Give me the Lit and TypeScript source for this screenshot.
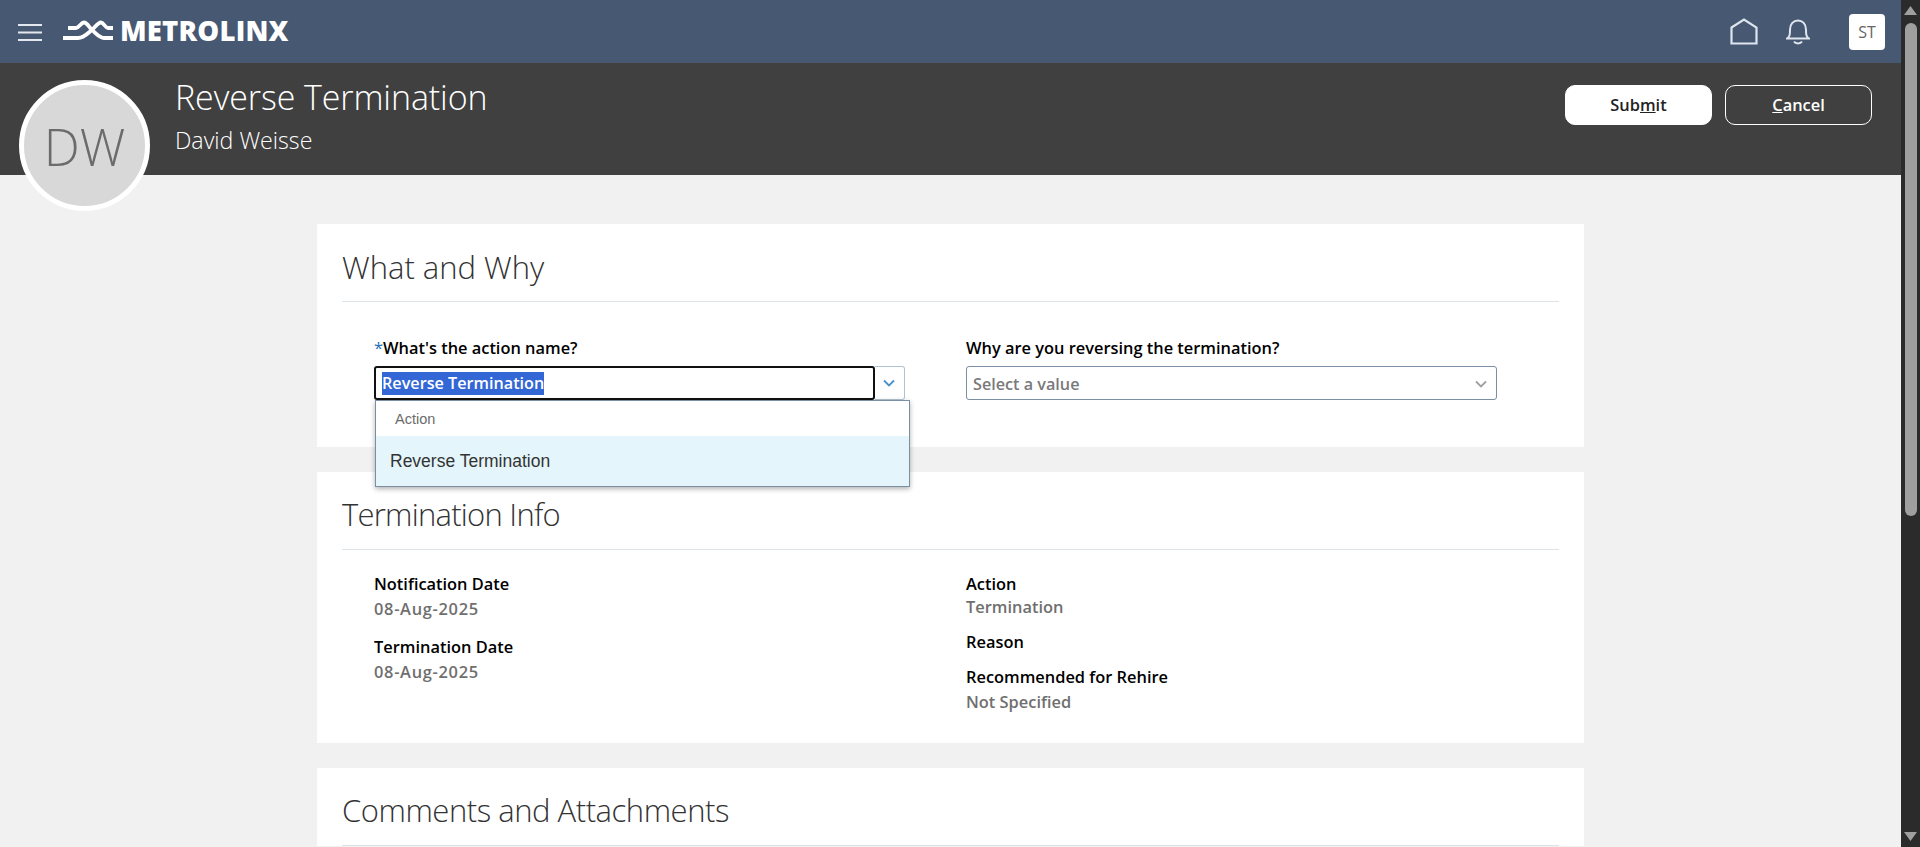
import { LitElement, html, css, nothing } from "lit";
import { customElement } from "lit/decorators.js";

const chevron = (color: string) => html`<svg class="chev" width="14" height="14" viewBox="0 0 14 14" fill="none" stroke=${color} stroke-width="1.8"><path d="M2 4.5 7 9.5 12 4.5" /></svg>`;

interface InfoItem {
  label: string;
  value?: string;
  tight?: boolean;
  date?: boolean;
}

const leftInfo: InfoItem[] = [
  { label: "Notification Date", value: "08-Aug-2025", date: true },
  { label: "Termination Date", value: "08-Aug-2025", date: true },
];

const rightInfo: InfoItem[] = [
  { label: "Action", value: "Termination", tight: true },
  { label: "Reason" },
  { label: "Recommended for Rehire", value: "Not Specified" },
];

@customElement("app-root")
export class AppRoot extends LitElement {
  static styles = css`
    :host {
      display: flex;
      height: 847px;
      overflow: hidden;
      font-family: "Open Sans", "Noto Sans", sans-serif;
      background: #f1f1f1;
      color: #000;
    }
    .page {
      flex: 1;
      min-width: 0;
      position: relative;
      overflow: hidden;
    }

    /* top nav */
    .nav {
      height: 63px;
      background: #465872;
      display: flex;
      align-items: center;
      padding: 0 16px 0 18px;
    }
    .logo {
      display: flex;
      align-items: center;
      margin-left: 20px;
      margin-bottom: 2px;
      color: #fff;
    }
    .logo-text {
      font-family: "Open Sans", sans-serif;
      font-weight: 800;
      font-size: 27.5px;
      line-height: 30px;
      margin-left: 6px;
      letter-spacing: 0.2px;
    }
    .nav-right {
      margin-left: auto;
      display: flex;
      align-items: center;
    }
    .bell { margin-left: 28px; }
    .user {
      margin-left: 39px;
      width: 36px;
      height: 36px;
      border-radius: 4px;
      background: #fff;
      color: #666;
      font-size: 16px;
      display: flex;
      align-items: center;
      justify-content: center;
    }

    /* dark title band */
    .band {
      height: 112px;
      background: #404040;
      display: flex;
      padding: 0 29px 0 175px;
      color: #fff;
    }
    .avatar {
      position: absolute;
      left: 19px;
      top: 80px;
      width: 131px;
      height: 131px;
      box-sizing: border-box;
      border: 5px solid #fff;
      border-radius: 50%;
      background: #d8d8d8;
      color: #6b6b6b;
      font-size: 51px;
      font-weight: 300;
      display: flex;
      align-items: center;
      justify-content: center;
    }
    h1 {
      margin: 12px 0 0;
      font-size: 34px;
      line-height: 44px;
      font-weight: 300;
      letter-spacing: -0.1px;
    }
    .person {
      font-size: 23.2px;
      line-height: 30px;
      font-weight: 300;
      margin-top: 6px;
    }
    .actions {
      margin-left: auto;
      display: flex;
      gap: 13px;
      padding-top: 22px;
    }
    .btn {
      width: 147px;
      height: 40px;
      box-sizing: border-box;
      border-radius: 10px;
      border: 1px solid #fff;
      padding-bottom: 2px;
      font-size: 16.4px;
      font-weight: 600;
      display: flex;
      align-items: center;
      justify-content: center;
    }
    .btn.primary { background: #fff; color: #222; }
    .btn.ghost { color: #fff; }

    /* cards */
    .content {
      width: 1267px;
      margin: 0 auto;
      padding-top: 49px;
      display: flex;
      flex-direction: column;
      gap: 25px;
    }
    .card {
      background: #fff;
      padding: 25px 25px 0;
    }
    h2 {
      margin: 0;
      height: 52px;
      border-bottom: 1px solid #dce3e8;
      font-size: 31px;
      line-height: 36px;
      font-weight: 300;
      color: #333;
    }
    h2.info-title { letter-spacing: -0.75px; line-height: 35px; }
    h2.comments-title { letter-spacing: -0.46px; line-height: 35px; }
    .columns {
      display: grid;
      grid-template-columns: 592px 1fr;
      padding-left: 32px;
    }
    .form { padding-top: 35px; padding-bottom: 47px; }
    .info { padding-top: 23px; padding-bottom: 29px; }

    .label {
      font-size: 16.4px;
      line-height: 22px;
      font-weight: 600;
      color: #000;
    }
    .req { color: #1a6fb5; font-weight: 400; }
    .field { position: relative; width: 531px; }
    .control {
      display: flex;
      margin-top: 7px;
      height: 34px;
    }
    .box {
      flex: 1;
      box-sizing: border-box;
      border: 1px solid #7a8fa3;
      border-radius: 3px;
      display: flex;
      align-items: center;
      padding: 1px 0 0 6px;
      font-size: 16.2px;
      font-weight: 600;
      color: #7a7a7a;
    }
    .box.plain {
      justify-content: space-between;
      padding-right: 8px;
    }
    .box.focus {
      border: 2px solid #111;
      padding-left: 6px;
      color: #fff;
    }
    .selected {
      background: #3367d6;
      color: #fff;
      line-height: 23px;
    }
    .drop-btn {
      width: 30px;
      box-sizing: border-box;
      border: 1px solid #b4c2cf;
      border-left: none;
      border-radius: 0 3px 3px 0;
      display: flex;
      align-items: center;
      justify-content: center;
      padding-right: 2px;
    }
    .menu {
      position: absolute;
      left: 1px;
      top: 63px;
      width: 535px;
      box-sizing: border-box;
      background: #fff;
      border: 1px solid #7a8fa3;
      box-shadow: 0 2px 5px rgba(0, 0, 0, 0.3);
      z-index: 2;
      font-family: "Liberation Sans", Arial, sans-serif;
    }
    .menu-head {
      height: 35px;
      display: flex;
      align-items: center;
      padding-left: 19px;
      font-size: 14.5px;
      color: #6b6b6b;
    }
    .menu-item {
      height: 50px;
      display: flex;
      align-items: center;
      padding-left: 14px;
      background: #e4f6fb;
      font-size: 17.5px;
      color: #333;
    }

    .stack { display: flex; flex-direction: column; gap: 13px; }
    .stack.dates { gap: 15px; }
    .item-value {
      font-size: 16.4px;
      line-height: 24px;
      font-weight: 600;
      color: #6f6f6f;
      margin-top: 2px;
    }
    .item-value.tight { margin-top: 1px; line-height: 22px; }
    .item-value.date { letter-spacing: 0.7px; }

    /* scrollbar */
    .scrollbar {
      width: 19px;
      background: #2b2b2b;
      position: relative;
      flex: none;
    }
    .thumb {
      position: absolute;
      left: 4px;
      right: 3px;
      top: 23px;
      height: 493px;
      border-radius: 6px;
      background: #9f9f9f;
    }
    .arrow {
      position: absolute;
      left: 3px;
      width: 13px;
      height: 9px;
      background: #9f9f9f;
    }
    .arrow.up { top: 6px; clip-path: polygon(50% 0, 100% 100%, 0 100%); }
    .arrow.down { bottom: 6px; clip-path: polygon(0 0, 100% 0, 50% 100%); }
  `;

  private infoColumn(items: InfoItem[], extra = "") {
    return html`<div class="stack ${extra}">
      ${items.map(
        (i) => html`<div>
          <div class="label">${i.label}</div>
          ${i.value
            ? html`<div class="item-value ${i.tight ? "tight" : ""} ${i.date ? "date" : ""}">${i.value}</div>`
            : nothing}
        </div>`
      )}
    </div>`;
  }

  render() {
    return html`
      <div class="page">
        <div class="nav">
          <svg width="24" height="18" viewBox="0 0 24 18" fill="none" stroke="#e3e8ee" stroke-width="2"><path d="M0 2H24M0 9.500H24M0 17H24" /></svg>
          <div class="logo">
            <svg width="52" height="22" viewBox="62 20 52 22" fill="none" stroke="#fff" stroke-width="3.800">
              <path d="M63 38H78C84 38 88 33 92 30C95 27 98 22.500 101 22.500C104 22.500 105 28 108 28H113" />
              <path d="M68 28H76C79 28 81 22.500 84 22.500C87 22.500 89 27 92 30C96 33 99 38 105 38H113" />
            </svg>
            <span class="logo-text">METROLINX</span>
          </div>
          <div class="nav-right">
            <svg width="28" height="27" viewBox="0 0 28 27" fill="none" stroke="#dfe5ee" stroke-width="2.200"><path d="M1.500 9.500 14 1.500 26.500 9.500V25.500H1.500Z" /></svg>
            <svg class="bell" width="24" height="26" viewBox="0 0 24 26" fill="none" stroke="#dfe5ee" stroke-width="2"><path d="M1 19.500H23C20 17.500 20 15 20 10.500C20 5 16.500 1.500 12 1.500C7.500 1.500 4 5 4 10.500C4 15 4 17.500 1 19.500Z" /><path d="M8 22.500C9.500 25 14.500 25 16 22.500" /></svg>
            <div class="user">ST</div>
          </div>
        </div>

        <div class="band">
          <div>
            <h1>Reverse Termination</h1>
            <div class="person">David Weisse</div>
          </div>
          <div class="actions">
            <div class="btn primary"><span>Sub<u>m</u>it</span></div>
            <div class="btn ghost"><span><u>C</u>ancel</span></div>
          </div>
        </div>
        <div class="avatar">DW</div>

        <div class="content">
          <section class="card">
            <h2>What and Why</h2>
            <div class="columns form">
              <div class="field">
                <div class="label"><span class="req">*</span>What's the action name?</div>
                <div class="control">
                  <div class="box focus"><span class="selected">Reverse Termination</span></div>
                  <div class="drop-btn">${chevron("#4a90c8")}</div>
                </div>
                <div class="menu">
                  <div class="menu-head">Action</div>
                  <div class="menu-item">Reverse Termination</div>
                </div>
              </div>
              <div class="field">
                <div class="label">Why are you reversing the termination?</div>
                <div class="control">
                  <div class="box plain"><span>Select a value</span>${chevron("#a0a0a0")}</div>
                </div>
              </div>
            </div>
          </section>

          <section class="card">
            <h2 class="info-title">Termination Info</h2>
            <div class="columns info">
              ${this.infoColumn(leftInfo, "dates")} ${this.infoColumn(rightInfo)}
            </div>
          </section>

          <section class="card">
            <h2 class="comments-title">Comments and Attachments</h2>
          </section>
        </div>
      </div>
      <div class="scrollbar">
        <div class="arrow up"></div>
        <div class="thumb"></div>
        <div class="arrow down"></div>
      </div>
    `;
  }
}
